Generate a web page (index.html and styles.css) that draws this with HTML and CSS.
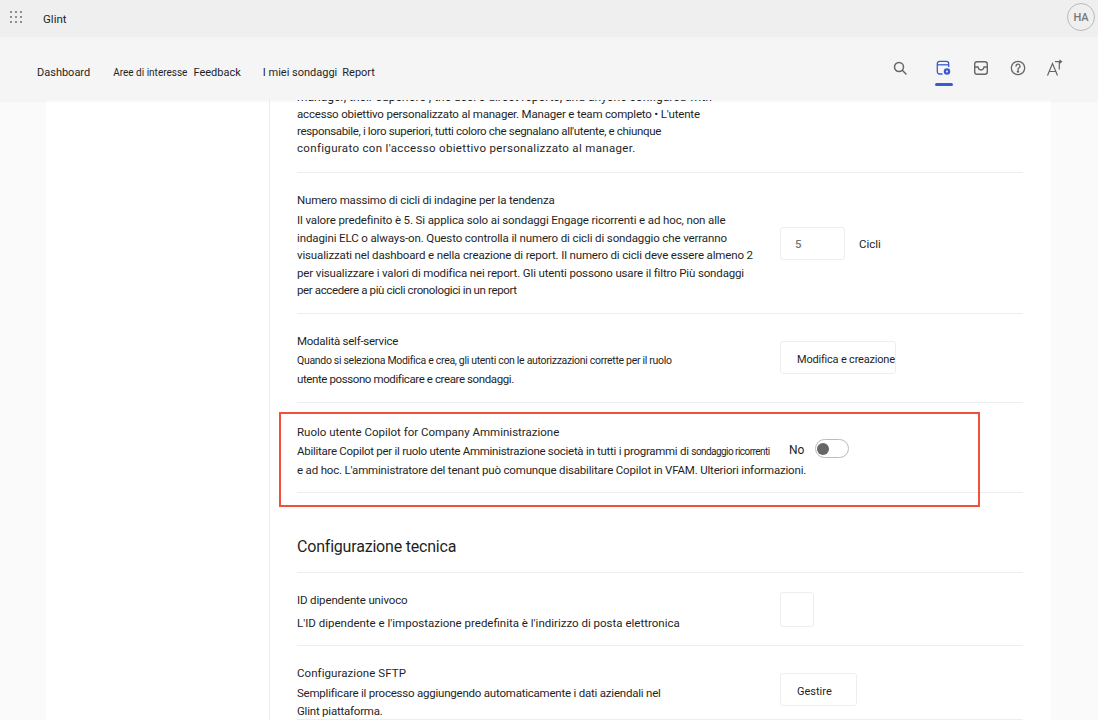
FILE: index.html
```html
<!DOCTYPE html>
<html lang="it">
<head>
<meta charset="utf-8">
<title>Glint</title>
<link rel="stylesheet" href="styles.css">
</head>
<body>
<div class="app">
  <header class="header">
    <div class="topbar">
      <svg class="waffle" width="14" height="14" viewBox="0 0 14 14" fill="#777"><circle cx="2" cy="2" r="1.1"/><circle cx="7" cy="2" r="1.1"/><circle cx="12" cy="2" r="1.1"/><circle cx="2" cy="7" r="1.1"/><circle cx="7" cy="7" r="1.1"/><circle cx="12" cy="7" r="1.1"/><circle cx="2" cy="12" r="1.1"/><circle cx="7" cy="12" r="1.1"/><circle cx="12" cy="12" r="1.1"/></svg>
      <span class="brand">Glint</span>
      <span class="avatar">HA</span>
    </div>
    <nav class="navbar">
      <a class="nav-link nav-dashboard">Dashboard</a>
      <a class="nav-link nav-aree">Aree di interesse</a>
      <a class="nav-link nav-feedback">Feedback</a>
      <a class="nav-link nav-sondaggi">I miei sondaggi</a>
      <a class="nav-link">Report</a>
      <div class="nav-icons">
        <span class="icon-slot icon-search">
          <svg width="18" height="18" viewBox="0 0 18 18" fill="none" stroke="#666" stroke-width="1.5"><circle cx="8" cy="8" r="4.500"/><path d="M11.300 11.300L15 15" stroke-linecap="round"/></svg>
        </span>
        <span class="icon-slot active">
          <svg width="18" height="18" viewBox="0 0 18 18" fill="none" stroke="#3b5bcc" stroke-width="1.3"><path d="M7.500 15H4.500A2.200 2.200 0 0 1 2.300 12.800V4.500A2.200 2.200 0 0 1 4.500 2.300H11.500A2.200 2.200 0 0 1 13.700 4.500V8"/><path d="M2.300 5.800H13.700"/><circle cx="12" cy="12.500" r="2.600" fill="#3b5bcc"/><circle cx="12" cy="12.500" r=".9" fill="#fff" stroke="none"/></svg>
        </span>
        <span class="icon-slot">
          <svg width="18" height="18" viewBox="0 0 18 18" fill="none" stroke="#666" stroke-width="1.4"><rect x="2.700" y="2.700" width="12.600" height="12.600" rx="2.500"/><path d="M2.700 8H6C6.300 10 7.500 11 9 11S11.700 10 12 8H15.300"/></svg>
        </span>
        <span class="icon-slot">
          <svg width="18" height="18" viewBox="0 0 18 18" fill="none" stroke="#666" stroke-width="1.300"><circle cx="9" cy="9" r="6.700"/><path d="M7 7.200A2 2 0 1 1 9.800 9C9.200 9.400 9 9.800 9 10.500" stroke-linecap="round"/><circle cx="9" cy="12.500" r=".6" fill="#666"/></svg>
        </span>
        <span class="icon-slot">
          <svg width="18" height="18" viewBox="0 0 18 18" fill="none" stroke="#666" stroke-width="1.200"><path d="M1.500 16.500L6.500 4.500L11.500 16.500M3.200 12.500H9.800"/><path d="M9 2.700H15.500M13.500 1L15.500 2.700L13.500 4.400M13.300 2.700V10.500"/></svg>
        </span>
      </div>
    </nav>
  </header>
  <main class="page">
    <div class="card">
      <aside class="sidebar"></aside>
      <section class="content">
        <div class="setting first">
          <p class="desc">
            <span class="line f1">manager, their superiors , the user's direct reports, and anyone configured with</span>
            <span class="line f2">accesso obiettivo personalizzato al manager. Manager e team completo • L'utente</span>
            <span class="line f3">responsabile, i loro superiori, tutti coloro che segnalano all'utente, e chiunque</span>
            <span class="line f4">configurato con l'accesso obiettivo personalizzato al manager.</span>
          </p>
        </div>
        <div class="setting cycles">
          <div class="setting-text">
            <h3 class="label l-cycles">Numero massimo di cicli di indagine per la tendenza</h3>
            <p class="desc">
              <span class="line c1">Il valore predefinito è 5. Si applica solo ai sondaggi Engage ricorrenti e ad hoc, non alle</span>
              <span class="line c1">indagini ELC o always-on. Questo controlla il numero di cicli di sondaggio che verranno</span>
              <span class="line">visualizzati nel dashboard e nella creazione di report. Il numero di cicli deve essere almeno 2</span>
              <span class="line">per visualizzare i valori di modifica nei report. Gli utenti possono usare il filtro Più sondaggi</span>
              <span class="line c5">per accedere a più cicli cronologici in un report</span>
            </p>
          </div>
          <div class="control cycles-control">
            <span class="box number-box">5</span>
            <span class="unit">Cicli</span>
          </div>
        </div>
        <div class="setting selfservice">
          <div class="setting-text">
            <h3 class="label l-self">Modalità self-service</h3>
            <p class="desc desc-self">
              <span class="line s1">Quando si seleziona Modifica e crea, gli utenti con le autorizzazioni corrette per il ruolo</span>
              <span class="line s2">utente possono modificare e creare sondaggi.</span>
            </p>
          </div>
          <div class="control">
            <span class="box select-box">Modifica e creazione</span>
          </div>
        </div>
        <div class="setting copilot">
          <div class="setting-text wide">
            <h3 class="label l-copilot">Ruolo utente Copilot for Company Amministrazione</h3>
            <p class="desc desc-copilot">
              <span class="line p1">Abilitare Copilot per il ruolo utente Amministrazione società in tutti i programmi di <span class="squeeze">sondaggio ricorrenti</span></span>
              <span class="line">e ad hoc. L'amministratore del tenant può comunque disabilitare Copilot in VFAM. Ulteriori informazioni.</span>
            </p>
          </div>
          <span class="toggle-label">No</span>
          <span class="toggle"><span class="knob"></span></span>
          <div class="highlight"></div>
        </div>
        <h2 class="section-title">Configurazione tecnica</h2>
        <div class="setting unique">
          <div class="setting-text">
            <h3 class="label l-unique">ID dipendente univoco</h3>
            <p class="desc desc-unique">L'ID dipendente e l'impostazione predefinita è l'indirizzo di posta elettronica</p>
          </div>
          <div class="control">
            <span class="box empty-box"></span>
          </div>
        </div>
        <div class="setting sftp">
          <div class="setting-text">
            <h3 class="label l-sftp">Configurazione SFTP</h3>
            <p class="desc desc-sftp">
              <span class="line">Semplificare il processo aggiungendo automaticamente i dati aziendali nel</span>
              <span class="line">Glint piattaforma.</span>
            </p>
          </div>
          <div class="control">
            <span class="box manage-box">Gestire</span>
          </div>
        </div>
      </section>
    </div>
  </main>
</div>
</body>
</html>
```
FILE: styles.css
```css
* { box-sizing: border-box; }
html, body { margin: 0; padding: 0; height: 100%; }
body { font-family: "Roboto", "Liberation Sans", sans-serif; color: #1f1f1f; background: #fafafa; overflow: hidden; font-size: 12px; }
.app { height: 720px; display: flex; flex-direction: column; overflow: hidden; }
.header { position: relative; z-index: 2; flex: none; box-shadow: 0 1px 3px rgba(0,0,0,.05); }
.topbar { height: 37px; background: #efefef; display: flex; align-items: center; padding-left: 9px; }
.waffle { flex: none; margin-bottom: 4px; }
.brand { margin-left: 20px; font-size: 11.500px; }
.avatar { margin-left: auto; margin-right: 3px; width: 28px; height: 28px; margin-bottom: 3px; border-radius: 50%; border: 1.500px solid #bbb; color: #777; font-size: 11px; font-weight: 500; display: flex; align-items: center; justify-content: center; }
.navbar { height: 63px; background: #f5f5f5; display: flex; align-items: center; padding: 0 34px 0 37px; }
.nav-link { font-size: 11px; white-space: nowrap; padding-top: 7px; }
.nav-dashboard { margin-right: 23px; }
.nav-aree { margin-right: 6px; font-size: 10px; }
.nav-feedback { margin-right: 22px; }
.nav-sondaggi { margin-right: 5px; }
.nav-icons { margin-left: auto; display: flex; gap: 19px; margin-bottom: 1px; }
.icon-slot { position: relative; display: flex; width: 18px; height: 18px; }
.icon-search { margin-right: 7px; }
.icon-slot.active::after { content: ""; position: absolute; left: 0; right: 0; bottom: -9px; height: 3px; border-radius: 2px; background: #3b5bcc; }
.page { flex: 1; min-height: 0; padding: 0 47px 0 46px; overflow: hidden; }
.card { background: #fff; display: flex; height: 100%; }
.sidebar { width: 224px; flex: none; border-right: 1px solid #eee; }
.content { flex: 1; padding: 0 28px 0 27px; margin-top: -11px; }
.setting { position: relative; display: flex; align-items: flex-start; border-bottom: 1px solid #eee; }
.setting-text { width: 483px; flex: none; }
.setting-text.wide { width: 492px; }
.label { margin: 0 0 3px; font-size: 11.500px; font-weight: 400; line-height: 17px; white-space: nowrap; }
.desc { margin: 0; font-size: 11.500px; line-height: 17.500px; white-space: nowrap; letter-spacing: -.15px; }
.line { display: block; }
.first { height: 84px; }
.first .desc { line-height: 17px; }
.f1 { font-size: 12px; letter-spacing: 0; }
.f2 { letter-spacing: -.19px; }
.f3 { letter-spacing: -.34px; }
.f4 { letter-spacing: .33px; }
.c1 { letter-spacing: -.12px; }
.c5 { letter-spacing: -.37px; }
.s1 { font-size: 10.500px; letter-spacing: -.31px; }
.s2 { letter-spacing: -.4px; }
.p1 { letter-spacing: -.28px; }
.squeeze { font-size: 10px; letter-spacing: -.55px; }
.l-cycles { letter-spacing: -.18px; }
.l-self { letter-spacing: -.25px; margin-bottom: 1px; }
.l-copilot { margin-bottom: 1px; }
.l-unique { letter-spacing: -.14px; margin-bottom: 5px; }
.l-sftp { letter-spacing: .07px; }
.desc-self { line-height: 19px; letter-spacing: -.09px; }
.desc-copilot { line-height: 18px; letter-spacing: -.18px; }
.desc-unique { line-height: 18px; letter-spacing: 0; }
.desc-sftp { letter-spacing: -.22px; }
.cycles { height: 141px; padding-top: 19px; }
.selfservice { height: 89px; padding-top: 19px; }
.copilot { height: 90px; padding-top: 21px; }
.control { display: flex; align-items: flex-start; padding-top: 8px; }
.box { display: flex; align-items: center; background: #fff; border: 1px solid #eee; border-radius: 3px; white-space: nowrap; font-size: 11px; }
.number-box { width: 65px; height: 33px; padding-left: 14px; color: #777; font-size: 11.500px; font-weight: 500; }
.cycles-control { padding-top: 35px; align-items: center; }
.unit { margin-left: 14px; font-size: 11.500px; }
.select-box { width: 116px; height: 33px; padding: 4px 0 0 16px; letter-spacing: -.2px; }
.toggle-label { width: 26px; margin-top: 18px; line-height: 17px; }
.toggle { width: 34px; height: 19px; margin-top: 15px; border: 1px solid #bbb; border-radius: 10px; background: #fff; display: flex; align-items: center; padding-left: 1px; }
.knob { width: 12px; height: 12px; border-radius: 50%; background: #666; }
.highlight { position: absolute; left: -18px; right: 43px; top: 9px; bottom: -15px; border: 2px solid #f0513a; pointer-events: none; }
.section-title { margin: 0; height: 80px; padding-top: 44px; font-size: 16px; font-weight: 400; line-height: 20px; letter-spacing: -.2px; border-bottom: 1px solid #eee; }
.unique { height: 73px; padding-top: 19px; }
.unique .control { padding-top: 0; }
.empty-box { width: 34px; height: 35px; }
.sftp { height: 74px; padding-top: 19px; }
.manage-box { width: 77px; height: 33px; padding: 4px 0 0 16px; }
```
